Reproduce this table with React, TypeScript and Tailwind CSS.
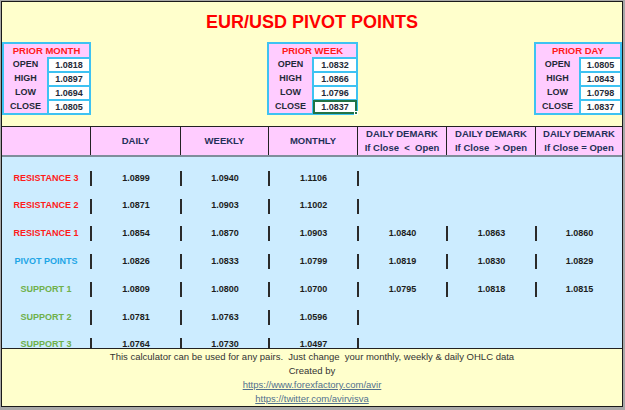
import type { ReactNode } from 'react';

type PriorBox = {
    title: string;
    width: string;
    values: string[];
    selectLast?: boolean;
};

type PivotRow = {
    label: string;
    color: string;
    values: string[];
    demark: string[] | null;
};

const labels = ['OPEN', 'HIGH', 'LOW', 'CLOSE'];

const boxes: PriorBox[] = [
    { title: 'PRIOR MONTH', width: 'w-[89px]', values: ['1.0818', '1.0897', '1.0694', '1.0805'] },
    { title: 'PRIOR WEEK', width: 'w-[91px]', values: ['1.0832', '1.0866', '1.0796', '1.0837'], selectLast: true },
    { title: 'PRIOR DAY', width: 'w-[88px]', values: ['1.0805', '1.0843', '1.0798', '1.0837'] },
];

const rows: PivotRow[] = [
    { label: 'RESISTANCE 3', color: 'text-[#ff1a1a]', values: ['1.0899', '1.0940', '1.1106'], demark: null },
    { label: 'RESISTANCE 2', color: 'text-[#ff1a1a]', values: ['1.0871', '1.0903', '1.1002'], demark: null },
    { label: 'RESISTANCE 1', color: 'text-[#ff1a1a]', values: ['1.0854', '1.0870', '1.0903'], demark: ['1.0840', '1.0863', '1.0860'] },
    { label: 'PIVOT POINTS', color: 'text-[#1ea5e6]', values: ['1.0826', '1.0833', '1.0799'], demark: ['1.0819', '1.0830', '1.0829'] },
    { label: 'SUPPORT 1', color: 'text-[#6fb04a]', values: ['1.0809', '1.0800', '1.0700'], demark: ['1.0795', '1.0818', '1.0815'] },
    { label: 'SUPPORT 2', color: 'text-[#6fb04a]', values: ['1.0781', '1.0763', '1.0596'], demark: null },
    { label: 'SUPPORT 3', color: 'text-[#6fb04a]', values: ['1.0764', '1.0730', '1.0497'], demark: null },
];

const cols = 'grid grid-cols-[88px_90px_88px_89px_89px_89px_87px]';

const PriorTable = ({ box }: { box: PriorBox }) => (
    <div className={`${box.width} border-2 border-[#3ec2f2] bg-[#ffccff]`}>
        <div className="h-[13px] flex items-center justify-center text-[9.5px] font-bold text-[#ff1a1a] leading-none">
            {box.title}
        </div>
        {labels.map((l, i) => (
            <div key={l} className="h-[14px] flex">
                <div className="w-[43px] flex items-center justify-center text-[9px] font-bold text-[#1f2a38] leading-none">
                    {l}
                </div>
                <div className="relative flex-1 bg-white border-l-2 border-t-2 border-[#3ec2f2] flex items-center justify-center text-[9px] font-bold text-[#1f2a38] leading-none">
                    {box.selectLast && i === 3 ? (
                        <div className="absolute -inset-px border-2 border-[#217346] flex items-center justify-center">
                            {box.values[i]}
                            <span className="absolute -right-[3px] -bottom-[3px] w-[4px] h-[4px] bg-[#217346] border border-white" />
                        </div>
                    ) : (
                        box.values[i]
                    )}
                </div>
            </div>
        ))}
    </div>
);

const HeadCell = ({ children, first }: { children?: ReactNode; first?: boolean }) => (
    <div className={`${first ? '' : 'border-l border-[#222]'} flex flex-col items-center justify-center text-[9.5px] font-bold text-[#1f3058] leading-[14px] whitespace-pre`}>
        {children}
    </div>
);

const ValueCell = ({ value, bar }: { value?: string; bar: boolean }) => (
    <div className="flex items-center">
        <div className={`${bar ? 'border-l-2 border-[#2a2a2a]' : ''} w-full h-[15px] flex items-center justify-center text-[9px] font-bold text-[#1c1c1c]`}>
            {value}
        </div>
    </div>
);

export default function App() {
    return (
        <div className="w-[625px] h-[410px] bg-[#a8a8a8] pt-px pl-px font-['Liberation_Sans',Arial,sans-serif]">
            <div className="w-[622px] h-[406px] border border-[#1a1a1a] bg-[#ffffcc] flex flex-col overflow-hidden">
                {/* top section */}
                <div className="h-[126px] flex flex-col">
                    <div className="h-[40px] flex items-center justify-center text-[18px] font-bold text-[#ff0000] leading-none">
                        EUR/USD PIVOT POINTS
                    </div>
                    <div className="flex justify-between items-start">
                        {boxes.map((b) => (
                            <PriorTable key={b.title} box={b} />
                        ))}
                    </div>
                </div>

                {/* header row */}
                <div className={`${cols} h-[31px] border-t border-[#222] border-b-2 border-b-[#7f8e9c] bg-[#ffccff]`}>
                    <HeadCell first />
                    <HeadCell>DAILY</HeadCell>
                    <HeadCell>WEEKLY</HeadCell>
                    <HeadCell>MONTHLY</HeadCell>
                    <HeadCell>
                        <span>DAILY DEMARK</span>
                        <span className="font-semibold">If Close  &lt;  Open</span>
                    </HeadCell>
                    <HeadCell>
                        <span>DAILY DEMARK</span>
                        <span className="font-semibold">If Close  &gt; Open</span>
                    </HeadCell>
                    <HeadCell>
                        <span>DAILY DEMARK</span>
                        <span className="font-semibold">If Close = Open</span>
                    </HeadCell>
                </div>

                {/* body */}
                <div className="h-[193px] bg-[#ccecff] pt-[7px] overflow-hidden">
                    {rows.map((r) => (
                        <div key={r.label} className={`${cols} h-[27.8px]`}>
                            <div className={`flex items-center justify-center text-[9px] font-bold ${r.color}`}>
                                {r.label}
                            </div>
                            {r.values.map((v, i) => (
                                <ValueCell key={i} value={v} bar />
                            ))}
                            <ValueCell value={r.demark?.[0]} bar />
                            <ValueCell value={r.demark?.[1]} bar={!!r.demark} />
                            <ValueCell value={r.demark?.[2]} bar={!!r.demark} />
                        </div>
                    ))}
                </div>

                {/* footer */}
                <div className="flex-1 border-t border-[#222] pt-px flex flex-col items-center text-[9.5px] leading-[14px] text-[#333] whitespace-pre">
                    <span>This calculator can be used for any pairs.  Just change  your monthly, weekly &amp; daily OHLC data</span>
                    <span>Created by</span>
                    <span className="underline text-[#52708e]">https://www.forexfactory.com/avir</span>
                    <span className="underline text-[#52708e]">https://twitter.com/avirvisva</span>
                </div>
            </div>
        </div>
    );
}
